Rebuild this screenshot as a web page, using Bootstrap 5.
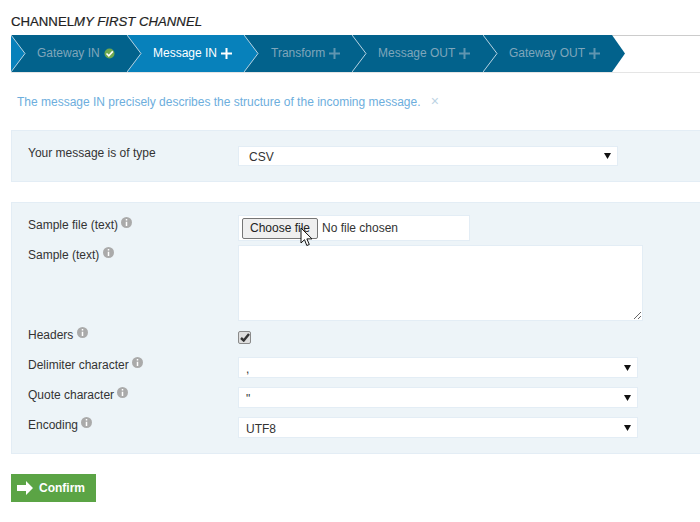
<!DOCTYPE html>
<html lang="en">
<head>
<meta charset="UTF-8">
<title>Channel</title>
<link href="https://cdn.jsdelivr.net/npm/bootstrap@5.3.0/dist/css/bootstrap.min.css" rel="stylesheet">
<style>
body { font-family: "Liberation Sans", Arial, sans-serif; font-size: 12px; color: #333; padding-left: 11px; overflow: hidden; }
.page-title { font-size: 13.2px; font-weight: 400; color: #222; margin: 0; padding-top: 14px; height: 35px; line-height: 16px; -webkit-text-stroke: 0.2px #222; }
.step-bar { height: 38px; border-top: 1px solid #ccc; border-bottom: 1px solid #e5e5e5; display: flex; box-sizing: border-box; }
.step-item { position: relative; height: 37px; margin-top: -1px; background: #02628c; color: #7fa6bb; font-size: 12px; display: flex; align-items: center; gap: 4px; padding: 0 0 1px 26px; }
.step-item.is-active { background: #0781bb; color: #fff; }
.step-gateway-in { width: 116px; }
.step-message-in { width: 117px; }
.step-transform { width: 108px; padding-left: 27px; }
.step-message-out { width: 131px; }
.step-gateway-out { width: 129px; }
.step-tip { position: absolute; left: 100%; top: 0; z-index: 2; }
.step-first { position: absolute; left: 0; top: 0; z-index: 2; }
.msg-line { color: #6daedd; font-size: 12px; margin: 0; padding: 20px 0 0 6px; height: 57px; line-height: 16px; }
.msg-close { color: #bcd3e4; font-size: 14px; margin-left: 7px; }
.form-zone { background: #edf4f8; border: 1px solid #e3edf5; border-right: 0; margin-right: -5px; }
.zone-type { height: 52px; padding: 15px 0 0 16px; margin-bottom: 20px; }
.zone-sample { height: 252px; padding: 12px 0 0 16px; margin-bottom: 20px; }
.field-row { display: flex; }
.select-row { margin-bottom: 9px; }
.field-label { width: 210px; flex: none; line-height: 16px; }
.label-file { padding-top: 2px; }
.label-type { margin-top: -1px; }
.row-headers { height: 32px; }
.row-headers .field-label { padding-top: 2px; }
.info-dot { display: inline-block; vertical-align: 1px; }
select.form-select { width: 400px; border-radius: 0; border: 1px solid #e3edf5; font-size: 12px; line-height: 14px; color: #333; height: 21px; padding: 4px 20px 2px 7px; background-image: url("data:image/svg+xml,%3Csvg xmlns='http://www.w3.org/2000/svg' width='7' height='6'%3E%3Cpath d='M0 0h7L3.500 6z' fill='%23111'/%3E%3C/svg%3E"); background-size: 7px 6px; background-position: right 6px center; }
select.select-type { width: 380px; height: 20px; padding: 3px 20px 2px 10px; }
.file-box { width: 232px; height: 26px; background: #fff; border: 1px solid #e3edf5; display: flex; align-items: center; padding-left: 3px; gap: 4px; position: relative; }
.file-btn { width: 76px; height: 21px; padding: 0; font-size: 12px; color: #222; background: #efefef; border: 1px solid #767676; border-radius: 2px; }
.mouse-cursor { position: absolute; left: 61px; top: 11px; z-index: 3; }
textarea.form-control { width: 405px; height: 76px; border-radius: 0; border: 1px solid #e3edf5; }
.check-box { width: 13px; height: 13px; margin-top: 6px; background: #dedede; border: 1px solid #8a8a8a; border-radius: 2px; display: flex; align-items: center; justify-content: center; }
.confirm-btn { width: 85px; height: 28px; border-radius: 0; border: 0; padding: 0 0 0 6px; background: #5ba445; color: #fff; font-size: 12px; font-weight: 700; display: flex; align-items: center; gap: 5px; }
</style>
</head>
<body>
<h1 class="page-title">CHANNEL<em>MY FIRST CHANNEL</em></h1>

<div class="step-bar">
  <div class="step-item step-gateway-in">
    <svg class="step-first" width="15" height="37"><path d="M0 0 14 18.500 0 37z" fill="#0781bb"/><path d="M0 0 14 18.500 0 37" fill="none" stroke="#b8d3e2"/></svg>
    Gateway IN
    <svg width="11" height="11" viewBox="0 0 11 11"><circle cx="5.500" cy="5.500" r="5" fill="#6fa84f"/><path d="M2.500 5.500 4.800 7.800 8.800 3.400" fill="none" stroke="#fff" stroke-width="1.600"/></svg>
    <svg class="step-tip" width="15" height="37"><path d="M0 0 14 18.500 0 37z" fill="#02628c"/><path d="M0 0 14 18.500 0 37" fill="none" stroke="#b8d3e2"/></svg>
  </div>
  <div class="step-item step-message-in is-active">
    Message IN
    <svg width="11" height="11" viewBox="0 0 11 11"><path d="M5.500 0v11M0 5.500h11" stroke="#fff" stroke-width="2"/></svg>
    <svg class="step-tip" width="15" height="37"><path d="M0 0 14 18.500 0 37z" fill="#0781bb"/><path d="M0 0 14 18.500 0 37" fill="none" stroke="#b8d3e2"/></svg>
  </div>
  <div class="step-item step-transform">
    Transform
    <svg width="11" height="11" viewBox="0 0 11 11"><path d="M5.500 0v11M0 5.500h11" stroke="#5f95b0" stroke-width="2"/></svg>
    <svg class="step-tip" width="15" height="37"><path d="M0 0 14 18.500 0 37z" fill="#02628c"/><path d="M0 0 14 18.500 0 37" fill="none" stroke="#b8d3e2"/></svg>
  </div>
  <div class="step-item step-message-out">
    Message OUT
    <svg width="11" height="11" viewBox="0 0 11 11"><path d="M5.500 0v11M0 5.500h11" stroke="#5f95b0" stroke-width="2"/></svg>
    <svg class="step-tip" width="15" height="37"><path d="M0 0 14 18.500 0 37z" fill="#02628c"/><path d="M0 0 14 18.500 0 37" fill="none" stroke="#b8d3e2"/></svg>
  </div>
  <div class="step-item step-gateway-out">
    Gateway OUT
    <svg width="11" height="11" viewBox="0 0 11 11"><path d="M5.500 0v11M0 5.500h11" stroke="#5f95b0" stroke-width="2"/></svg>
    <svg class="step-tip" width="14" height="37"><path d="M0 0 13 18.500 0 37z" fill="#02628c"/></svg>
  </div>
</div>

<p class="msg-line">The message IN precisely describes the structure of the incoming message. <span class="msg-close">×</span></p>

<div class="form-zone zone-type field-row">
  <div class="field-label label-type">Your message is of type</div>
  <select class="form-select select-type"><option>CSV</option></select>
</div>

<div class="form-zone zone-sample">
  <div class="field-row mb-1">
    <div class="field-label label-file">Sample file (text) <svg class="info-dot" width="11" height="11" viewBox="0 0 11 11"><circle cx="5.500" cy="5.500" r="5.500" fill="#aaa"/><path d="M5.500 2v1.500M5.500 4.700V9" stroke="#fff" stroke-width="1.500"/></svg></div>
    <div class="file-box">
      <button type="button" class="file-btn">Choose file</button>
      <span>No file chosen</span>
      <svg class="mouse-cursor" width="13" height="21" viewBox="0 0 13 21"><path d="M1 1v15l3.500-3.300 2.300 5.800 2.500-1-2.400-5.600H12z" fill="#fff" stroke="#111"/></svg>
    </div>
  </div>
  <div class="field-row mb-1">
    <div class="field-label label-file">Sample (text) <svg class="info-dot" width="11" height="11" viewBox="0 0 11 11"><circle cx="5.500" cy="5.500" r="5.500" fill="#aaa"/><path d="M5.500 2v1.500M5.500 4.700V9" stroke="#fff" stroke-width="1.500"/></svg></div>
    <textarea class="form-control"></textarea>
  </div>
  <div class="field-row row-headers">
    <div class="field-label">Headers <svg class="info-dot" width="11" height="11" viewBox="0 0 11 11"><circle cx="5.500" cy="5.500" r="5.500" fill="#aaa"/><path d="M5.500 2v1.500M5.500 4.700V9" stroke="#fff" stroke-width="1.500"/></svg></div>
    <div class="check-box"><svg width="10" height="9" viewBox="0 0 10 9"><path d="M1 5 3.700 7.500 9 1" fill="none" stroke="#333" stroke-width="2.400"/></svg></div>
  </div>
  <div class="field-row select-row">
    <div class="field-label">Delimiter character <svg class="info-dot" width="11" height="11" viewBox="0 0 11 11"><circle cx="5.500" cy="5.500" r="5.500" fill="#aaa"/><path d="M5.500 2v1.500M5.500 4.700V9" stroke="#fff" stroke-width="1.500"/></svg></div>
    <select class="form-select"><option>,</option></select>
  </div>
  <div class="field-row select-row">
    <div class="field-label">Quote character <svg class="info-dot" width="11" height="11" viewBox="0 0 11 11"><circle cx="5.500" cy="5.500" r="5.500" fill="#aaa"/><path d="M5.500 2v1.500M5.500 4.700V9" stroke="#fff" stroke-width="1.500"/></svg></div>
    <select class="form-select"><option>"</option></select>
  </div>
  <div class="field-row">
    <div class="field-label">Encoding <svg class="info-dot" width="11" height="11" viewBox="0 0 11 11"><circle cx="5.500" cy="5.500" r="5.500" fill="#aaa"/><path d="M5.500 2v1.500M5.500 4.700V9" stroke="#fff" stroke-width="1.500"/></svg></div>
    <select class="form-select"><option>UTF8</option></select>
  </div>
</div>

<button type="button" class="btn confirm-btn">
  <svg width="17" height="14" viewBox="0 0 17 14"><path d="M0 4h9V0l7 7-7 7v-4H0z" fill="#fff"/></svg>
  Confirm
</button>
</body>
</html>
